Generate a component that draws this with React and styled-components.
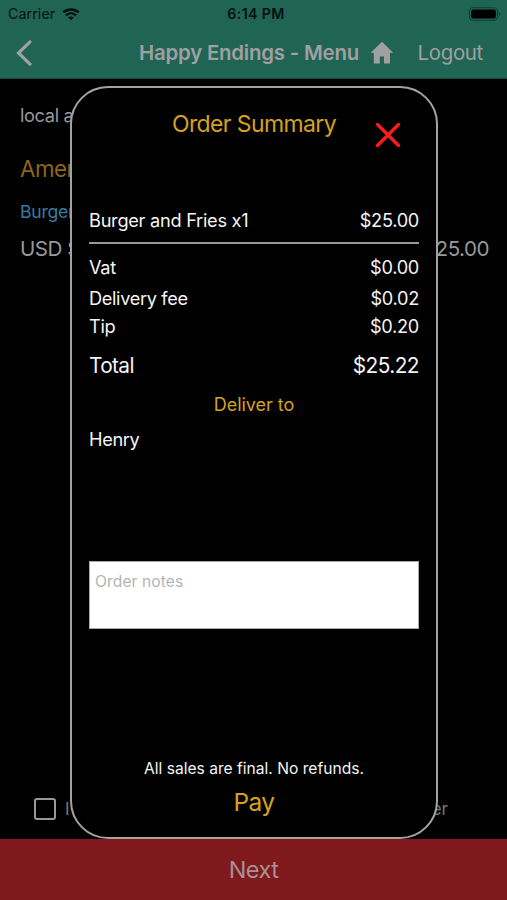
import React from "react";
import styled, { createGlobalStyle } from "styled-components";

const GlobalStyle = createGlobalStyle`
  * { box-sizing: border-box; }
  body { margin: 0; background: #000; }
`;

const Screen = styled.div`
  position: relative;
  width: 507px;
  height: 900px;
  overflow: hidden;
  display: flex;
  flex-direction: column;
  background: #000;
  color: #999;
  font-family: Inter, "Liberation Sans", sans-serif;
`;

const Text = styled.span`
  display: block;
  white-space: pre;
  line-height: 24px;
  font-size: ${(p) => p.$size}px;
  font-weight: ${(p) => p.$weight || 400};
  letter-spacing: ${(p) => p.$track || 0}px;
  color: ${(p) => p.$color || "inherit"};
`;

const Header = styled.header`
  height: 79px;
  flex: none;
  background: #206454;
  border-bottom: 1px solid #174a3f;
`;

const StatusBar = styled.div`
  height: 28px;
  padding: 0 6px 0 8px;
  display: grid;
  grid-template-columns: 1fr auto 1fr;
  align-items: center;
  color: #04110e;
`;

const Carrier = styled.div`
  display: flex;
  align-items: center;
  gap: 7px;
`;

const Clock = styled.div`
  padding-left: 3px;
`;

const BatteryIcon = styled.svg`
  justify-self: end;
  display: block;
`;

const NavBar = styled.div`
  height: 49px;
  padding: 0 24px 0 15px;
  display: flex;
  align-items: center;
  color: #a09fa1;
`;

const NavTitle = styled.div`
  margin-left: 107px;
  width: 231px;
`;

const LogoutLabel = styled.div`
  margin-left: 24px;
`;

const Content = styled.main`
  flex: 1;
  display: flex;
  flex-direction: column;
  padding: 24px 18px 0 20px;
`;

const MenuLine = styled.div`
  display: flex;
  justify-content: space-between;
  height: 24px;
  margin-bottom: ${(p) => p.$after}px;
`;

const ConsentRow = styled.div`
  display: flex;
  align-items: center;
  height: 24px;
  margin: auto 41px 18px 13px;
`;

const Checkbox = styled.span`
  width: 22px;
  height: 22px;
  border: 2px solid #999;
  border-radius: 3px;
  margin: 0 9px 0 1px;
`;

const ConsentEnd = styled.span`
  margin-left: auto;
`;

const NextButton = styled.button`
  height: 61px;
  flex: none;
  border: 0;
  padding: 0;
  background: #80191b;
  color: #a59294;
  font-family: inherit;
`;

const Dialog = styled.section`
  position: absolute;
  left: 70px;
  top: 86px;
  width: 368px;
  height: 753px;
  border: 2px solid #a3a3a3;
  border-radius: 38px;
  background: #000;
  color: #f4f4f4;
  padding: 24px 17px 0;
  display: flex;
  flex-direction: column;
`;

const DialogHead = styled.div`
  display: grid;
  grid-template-columns: 1fr auto 1fr;
  height: 96px;
  flex: none;
`;

const DialogTitle = styled.div`
  grid-column: 2;
`;

const CloseIcon = styled.svg`
  justify-self: end;
  margin: 9px 17px 0 0;
`;

const Row = styled.div`
  display: flex;
  justify-content: space-between;
  height: 24px;
  flex: none;
  margin-top: ${(p) => p.$gap || 0}px;
`;

const Rule = styled.div`
  height: 2px;
  margin-top: 10px;
  flex: none;
  background: #999;
`;

const Centered = styled.div`
  display: flex;
  justify-content: center;
  height: 24px;
  flex: none;
  margin-top: ${(p) => p.$gap}px;
`;

const Notes = styled.div`
  height: 68px;
  flex: none;
  margin-top: 110px;
  padding: 8px 5px;
  background: #fff;
  border: 1px solid #aaa;
  color: #b4b4b4;
`;

const gold = "#d6a21e";

export default function App() {
  return (
    <>
      <GlobalStyle />
      <Screen>
        <Header>
          <StatusBar>
            <Carrier>
              <Text $size={14.2} $track={0.1}>Carrier</Text>
              <svg width="18" height="13" viewBox="0 0 18 13" fill="none" stroke="currentColor">
                <path d="M1.3 4.4C5.5 .5 12.5 .5 16.7 4.4" strokeWidth="2.4" />
                <path d="M4 7.4C7 4.7 11 4.7 14 7.4" strokeWidth="2.3" />
                <path d="M9 12.2 6.2 9.5c1.6-1.4 4-1.4 5.6 0Z" fill="currentColor" stroke="none" />
              </svg>
            </Carrier>
            <Clock><Text $size={14.2} $weight={600} $track={0.35}>6:14 PM</Text></Clock>
            <BatteryIcon width="33" height="14" viewBox="0 0 33 14">
              <rect x="1.5" y=".8" width="28" height="12.4" rx="3.6" fill="none" stroke="#113e33" strokeWidth="1.1" />
              <rect x="3.2" y="2.5" width="24.6" height="9" rx="2" fill="#000" />
              <path d="M31 5v4c1.5-.6 1.5-3.4 0-4Z" fill="#113e33" />
            </BatteryIcon>
          </StatusBar>
          <NavBar>
            <svg width="17" height="28" viewBox="0 0 17 28" fill="none" stroke="currentColor" strokeWidth="3.2">
              <path d="M15 2.8 3.5 14 15 25.2" strokeLinecap="round" />
            </svg>
            <NavTitle>
              <Text $size={20.4} $weight={600} $track={-0.2}>Happy Endings - Menu</Text>
            </NavTitle>
            <svg width="24" height="24" viewBox="0 0 24 24" fill="currentColor">
              <path d="M12 .8 .6 11.8H3.8V22.6H9.8V15.6H14V22.6H20V11.8H23.2Z" />
            </svg>
            <LogoutLabel>
              <Text $size={20.4} $track={-0.3}>Logout</Text>
            </LogoutLabel>
          </NavBar>
        </Header>
        <Content>
          <MenuLine $after={30}><Text $size={18.2} $track={-0.35}>local a</Text></MenuLine>
          <MenuLine $after={19}><Text $size={22.4} $track={-0.5} $color="#8d661a">Amer</Text></MenuLine>
          <MenuLine $after={13}><Text $size={17.6} $track={-0.25} $color="#357ca5">Burger</Text></MenuLine>
          <MenuLine $after={0}>
            <Text $size={20.6} $track={-0.5}>USD $</Text>
            <Text $size={20.6} $track={-0.5}>25.00</Text>
          </MenuLine>
          <ConsentRow>
            <Checkbox />
            <Text $size={17} $color="#777">I</Text>
            <ConsentEnd><Text $size={17} $color="#777">er</Text></ConsentEnd>
          </ConsentRow>
        </Content>
        <NextButton><Text $size={23.5} $track={-0.6}>Next</Text></NextButton>

        <Dialog>
          <DialogHead>
            <DialogTitle><Text $size={23} $track={-0.6} $color={gold}>Order Summary</Text></DialogTitle>
            <CloseIcon width="28" height="28" viewBox="0 0 28 28" stroke="#fa1b1c" strokeWidth="3.4" strokeLinecap="round">
              <path d="m3.5 3.5 21 21M24.5 3.5l-21 21" />
            </CloseIcon>
          </DialogHead>
          <Row><Text $size={18.2} $track={-0.27}>Burger and Fries x1</Text><Text $size={18.2} $track={-0.3}>$25.00</Text></Row>
          <Rule />
          <Row $gap={11}><Text $size={18.2} $track={-0.3}>Vat</Text><Text $size={18.2} $track={-0.3}>$0.00</Text></Row>
          <Row $gap={7}><Text $size={18.2} $track={-0.35}>Delivery fee</Text><Text $size={18.2} $track={-0.3}>$0.02</Text></Row>
          <Row $gap={4}><Text $size={18.2} $track={-0.3}>Tip</Text><Text $size={18.2} $track={-0.3}>$0.20</Text></Row>
          <Row $gap={16}><Text $size={20.8} $track={-0.6}>Total</Text><Text $size={20.8} $track={-0.55}>$25.22</Text></Row>
          <Centered $gap={15}><Text $size={18} $track={-0.05} $color={gold}>Deliver to</Text></Centered>
          <Row $gap={10}><Text $size={18.2} $track={-0.35}>Henry</Text></Row>
          <Notes><Text $size={15.6} $track={0.1}>Order notes</Text></Notes>
          <Centered $gap={128}><Text $size={15.6}>All sales are final. No refunds.</Text></Centered>
          <Centered $gap={9}><Text $size={24.4} $track={-0.6} $color={gold}>Pay</Text></Centered>
        </Dialog>
      </Screen>
    </>
  );
}
